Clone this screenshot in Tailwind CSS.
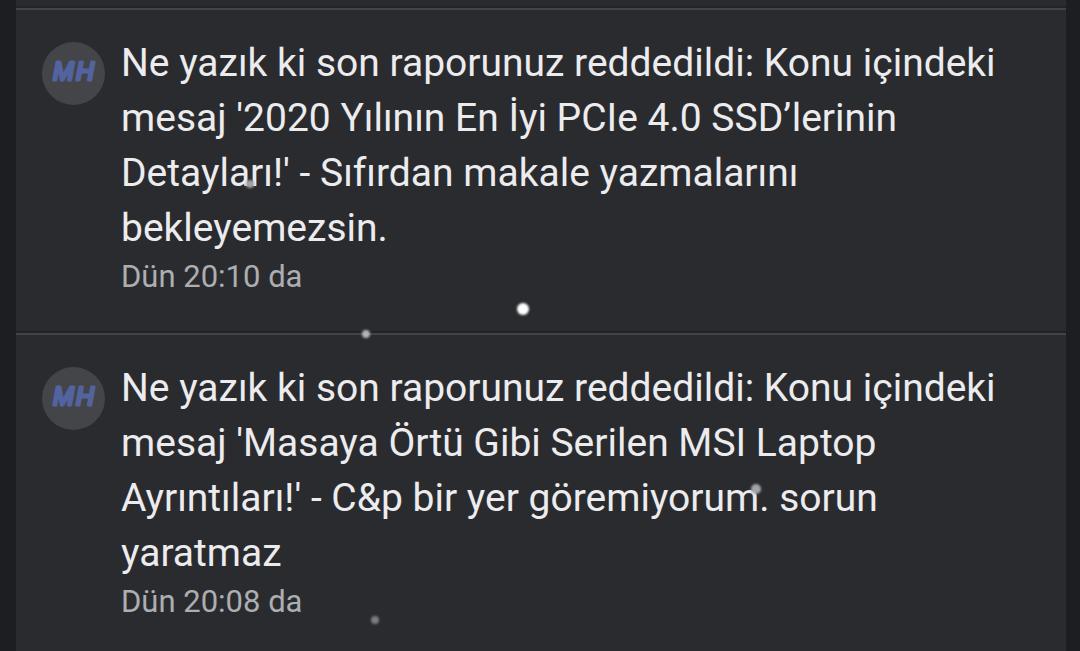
<!DOCTYPE html>
<html lang="tr">
<head>
  <meta charset="UTF-8">
  <title>Bildirimler</title>
  <meta name="viewport" content="width=device-width, initial-scale=1">
  <script src="https://cdn.jsdelivr.net/npm/@tailwindcss/browser@4"></script>
</head>
<body class="relative min-h-screen bg-[#1d1e22] pr-[14px] pl-4 font-[Roboto,sans-serif] text-[#ececee] [scrollbar-width:none]">

  <!-- ========== NOTIFICATIONS ========== -->
  <main class="min-h-screen bg-[#2a2b2f]">
    <div class="h-2 border-b-2 border-[#222327]"></div>
    <ul>
      <li class="border-b-2 border-[#222327]">
        <article class="flex items-start gap-4 border-t-2 border-[#42434d] pt-[26px] pr-8 pb-[33px] pl-[26px]">
          <a href="#" aria-label="MH" class="mt-[6px] size-[63px] shrink-0 rounded-full bg-[#444548]">
            <svg viewBox="0 0 63 63" class="size-full" fill="#5363a0" stroke="#5363a0" stroke-width="3" stroke-linejoin="round">
              <text y="38" font-family="Liberation Sans, sans-serif" font-size="25" font-style="italic"><tspan x="11">M</tspan><tspan x="34">H</tspan></text>
            </svg>
          </a>
          <div class="min-w-0 flex-1">
            <p class="text-[39px] leading-[55px]">Ne yazık ki son raporunuz reddedildi: Konu içindeki mesaj '2020 Yılının En İyi PCIe 4.0 SSD’lerinin Detayları!' - Sıfırdan makale yazmalarını bekleyemezsin.</p>
            <time class="block text-[31px] leading-[42px] text-[#adaeb1]">Dün 20:10 da</time>
          </div>
        </article>
      </li>
      <li class="border-b-2 border-[#222327]">
        <article class="flex items-start gap-4 border-t-2 border-[#42434d] pt-[26px] pr-8 pb-[33px] pl-[26px]">
          <a href="#" aria-label="MH" class="mt-[6px] size-[63px] shrink-0 rounded-full bg-[#444548]">
            <svg viewBox="0 0 63 63" class="size-full" fill="#5363a0" stroke="#5363a0" stroke-width="3" stroke-linejoin="round">
              <text y="38" font-family="Liberation Sans, sans-serif" font-size="25" font-style="italic"><tspan x="11">M</tspan><tspan x="34">H</tspan></text>
            </svg>
          </a>
          <div class="min-w-0 flex-1">
            <p class="text-[39px] leading-[55px]">Ne yazık ki son raporunuz reddedildi: Konu içindeki mesaj 'Masaya Örtü Gibi Serilen MSI Laptop Ayrıntıları!' - C&amp;p bir yer göremiyorum. sorun yaratmaz</p>
            <time class="block text-[31px] leading-[42px] text-[#adaeb1]">Dün 20:08 da</time>
          </div>
        </article>
      </li>
    </ul>
  </main>

  <!-- Falling snow -->
  <div class="pointer-events-none absolute inset-0" aria-hidden="true">
    <span class="absolute top-[303px] left-[517px] size-3 rounded-full bg-white blur-[1px]"></span>
    <span class="absolute top-[330px] left-[362px] size-2 rounded-full bg-[#b4b4b8] blur-[1px]"></span>
    <span class="absolute top-[180px] left-[246px] size-2 rounded-full bg-[#a4a4a8] blur-[1px]"></span>
    <span class="absolute top-[484px] left-[751px] size-[10px] rounded-full bg-[#a4a4a8] blur-[1px]"></span>
    <span class="absolute top-[616px] left-[371px] size-2 rounded-full bg-[#7c7d80] blur-[1px]"></span>
  </div>
</body>
</html>
